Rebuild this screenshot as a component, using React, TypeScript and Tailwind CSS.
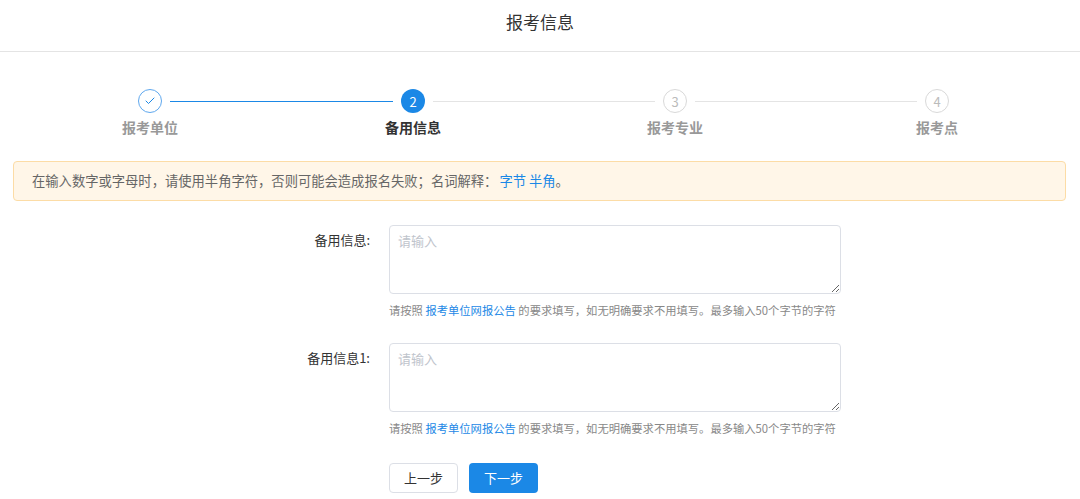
import { Check } from 'lucide-react';

const steps = [
  { n: 1, label: '报考单位', state: 'done' },
  { n: 2, label: '备用信息', state: 'active' },
  { n: 3, label: '报考专业', state: 'todo' },
  { n: 4, label: '报考点', state: 'todo' },
];

function StepCircle({ n, state }: { n: number; state: string }) {
  if (state === 'done') {
    return (
      <div className="w-6 h-6 rounded-full border border-[#5fa8ee] bg-white flex items-center justify-center text-[#1b88e6]">
        <Check size={12} strokeWidth={2} />
      </div>
    );
  }
  if (state === 'active') {
    return (
      <div className="w-6 h-6 rounded-full bg-[#1b88e6] text-white flex items-center justify-center text-[13px] leading-none">
        {n}
      </div>
    );
  }
  return (
    <div className="w-6 h-6 rounded-full border border-[#d9d9d9] bg-white text-[#bbbbbb] flex items-center justify-center text-[13px] leading-none">
      {n}
    </div>
  );
}

function FormRow({ label }: { label: string }) {
  return (
    <div className="flex">
      <div className="w-[389px] pr-[19px] text-right text-[13px] leading-5 text-[#333] mt-[5px]">{label}</div>
      <div className="flex flex-col">
        <textarea
          placeholder="请输入"
          className="w-[452px] h-[69px] rounded border border-[#dcdfe6] px-2 py-[5px] text-[13px] leading-5 text-[#333] placeholder:text-[#c0c4cc] outline-none resize-y"
        />
        <div className="mt-2 text-[11.3px] leading-4 text-[#888] whitespace-nowrap">
          请按照 <span className="text-[#1b88e6]">报考单位网报公告</span> 的要求填写，如无明确要求不用填写。最多输入50个字节的字符
        </div>
      </div>
    </div>
  );
}

export default function App() {
  return (
    <div className="w-[1080px] h-[499px] bg-white overflow-hidden" style={{ fontFamily: '"Noto Sans CJK SC", "Noto Sans", sans-serif' }}>
      <div className="h-[52px] border-b border-[#e4e4e4] pt-[11px] text-center text-[17px] leading-[22px] text-[#333]">
        报考信息
      </div>

      {/* Steps */}
      <div className="flex items-start pl-[138px] mt-[37px]">
        {steps.map((s, i) => (
          <div key={s.n} className="flex items-start">
            <div className="w-6 flex flex-col items-center">
              <StepCircle n={s.n} state={s.state} />
              <div
                className={`mt-[6px] whitespace-nowrap text-[14px] leading-4 font-bold ${
                  s.state === 'active' ? 'text-[#333]' : 'text-[#999]'
                }`}
              >
                {s.label}
              </div>
            </div>
            {i === 0 && <div className="h-px mt-3 mx-2 w-[223px] bg-[#1b88e6]" />}
            {i > 0 && i < steps.length - 1 && <div className="h-px mt-3 mx-2 w-[222px] bg-[#e4e4e4]" />}
          </div>
        ))}
      </div>

      {/* Notice */}
      <div className="ml-[13px] mr-[14px] mt-[26px] h-[40px] rounded border border-[#fcdca6] bg-[#fff6e8] pl-[18px] flex items-center text-[13.3px] text-[#666]">
        在输入数字或字母时，请使用半角字符，否则可能会造成报名失败；名词解释：
        <span className="ml-[2px] text-[#1b88e6]">字节 半角</span>。
      </div>

      <div className="mt-[24px] flex flex-col gap-[25px]">
        <FormRow label="备用信息:" />
        <FormRow label="备用信息1:" />
      </div>

      <div className="flex gap-[11px] pl-[389px] mt-[27px]">
        <button className="w-[69px] h-[30px] rounded border border-[#dcdfe6] bg-white text-[13px] text-[#333]">上一步</button>
        <button className="w-[69px] h-[30px] rounded bg-[#1b88e6] text-[13px] text-white">下一步</button>
      </div>
    </div>
  );
}
